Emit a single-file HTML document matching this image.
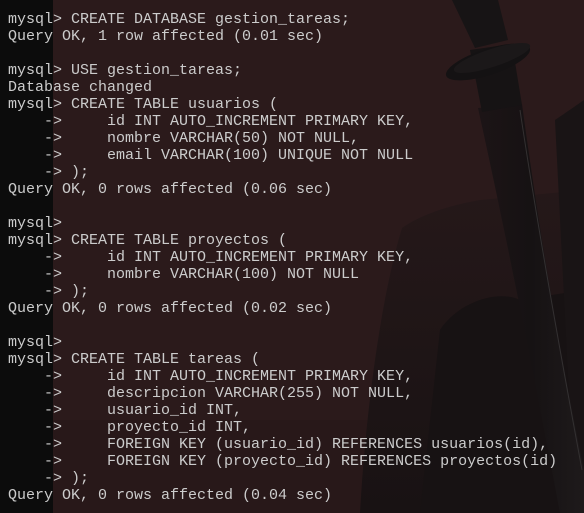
<!DOCTYPE html>
<html><head><meta charset="utf-8"><style>
html,body{margin:0;padding:0;}
body{width:584px;height:513px;overflow:hidden;position:relative;background:#2b1a1b;}
.strip{position:absolute;left:0;top:0;width:53px;height:513px;background:#0c0c0c;}
svg.bg{position:absolute;left:0;top:0;}
pre{position:absolute;left:8px;top:11px;margin:0;font-family:"Liberation Mono",monospace;font-size:15px;line-height:17px;color:#cccccc;white-space:pre;}
</style></head><body>
<svg class="bg" width="584" height="513" viewBox="0 0 584 513">
<defs>
<linearGradient id="fig" x1="0" y1="0" x2="0" y2="1">
<stop offset="0" stop-color="#251819"/><stop offset="1" stop-color="#181213"/>
</linearGradient>
<linearGradient id="bl" x1="0" y1="0" x2="1" y2="0">
<stop offset="0" stop-color="#1c1416"/><stop offset="0.5" stop-color="#161213"/><stop offset="1" stop-color="#1e1a1b"/>
</linearGradient>
</defs>
<rect x="53" y="0" width="531" height="513" fill="#2b1a1b"/>
<rect x="53" y="420" width="531" height="93" fill="#281819"/>
<path d="M402 228 C420 215 450 205 480 200 L584 190 L584 513 L360 513 C365 420 380 300 402 228 Z" fill="url(#fig)"/>
<path d="M440 330 C460 300 500 290 520 300 L584 290 L584 513 L420 513 Z" fill="#171213"/>
<path d="M555 120 C570 110 584 100 584 100 L584 513 L575 513 Z" fill="#191415"/>
<path d="M478 108 L522 104 C535 200 555 330 584 470 L584 513 L560 513 C535 380 505 230 478 108 Z" fill="url(#bl)"/>
<path d="M520 110 C535 210 556 330 582 470" stroke="#333031" stroke-width="1" fill="none"/>
<path d="M452 0 L498 0 L508 40 L475 48 Z" fill="#171415"/>
<path d="M470 50 L512 44 L522 105 L482 112 Z" fill="#161314"/>
<ellipse cx="488" cy="62" rx="44" ry="13" transform="rotate(-18 488 62)" fill="#141213"/>
<ellipse cx="492" cy="58" rx="40" ry="9" transform="rotate(-18 492 58)" fill="#1b1819"/>
</svg>
<div class="strip"></div>
<pre>mysql&gt; CREATE DATABASE gestion_tareas;
Query OK, 1 row affected (0.01 sec)

mysql&gt; USE gestion_tareas;
Database changed
mysql&gt; CREATE TABLE usuarios (
    -&gt;     id INT AUTO_INCREMENT PRIMARY KEY,
    -&gt;     nombre VARCHAR(50) NOT NULL,
    -&gt;     email VARCHAR(100) UNIQUE NOT NULL
    -&gt; );
Query OK, 0 rows affected (0.06 sec)

mysql&gt;
mysql&gt; CREATE TABLE proyectos (
    -&gt;     id INT AUTO_INCREMENT PRIMARY KEY,
    -&gt;     nombre VARCHAR(100) NOT NULL
    -&gt; );
Query OK, 0 rows affected (0.02 sec)

mysql&gt;
mysql&gt; CREATE TABLE tareas (
    -&gt;     id INT AUTO_INCREMENT PRIMARY KEY,
    -&gt;     descripcion VARCHAR(255) NOT NULL,
    -&gt;     usuario_id INT,
    -&gt;     proyecto_id INT,
    -&gt;     FOREIGN KEY (usuario_id) REFERENCES usuarios(id),
    -&gt;     FOREIGN KEY (proyecto_id) REFERENCES proyectos(id)
    -&gt; );
Query OK, 0 rows affected (0.04 sec)</pre>
</body></html>
